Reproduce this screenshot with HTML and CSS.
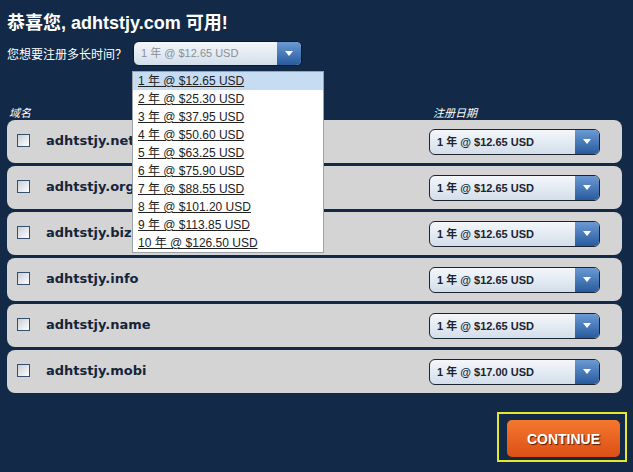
FILE: index.html
```html
<!DOCTYPE html>
<html lang="zh">
<head>
    <meta charset="UTF-8">
    <title>域名注册</title>
    <link rel="stylesheet" href="styles.css">
</head>
<body>

<div class="page">
    <h1>恭喜您, adhtstjy.com 可用!</h1>

    <div class="term">
        <span class="term-label">您想要注册多长时间？</span>
        <div class="pick pick-top">
            <span class="pick-text">1 年 @ $12.65 USD</span>
            <span class="pick-btn"><i class="arrow"></i></span>
        </div>

        <!-- open list of the select above -->
        <ul class="options">
            <li class="on"><span>1 年 @ $12.65 USD</span></li>
            <li><span>2 年 @ $25.30 USD</span></li>
            <li><span>3 年 @ $37.95 USD</span></li>
            <li><span>4 年 @ $50.60 USD</span></li>
            <li><span>5 年 @ $63.25 USD</span></li>
            <li><span>6 年 @ $75.90 USD</span></li>
            <li><span>7 年 @ $88.55 USD</span></li>
            <li><span>8 年 @ $101.20 USD</span></li>
            <li><span>9 年 @ $113.85 USD</span></li>
            <li><span>10 年 @ $126.50 USD</span></li>
        </ul>
    </div>

    <div class="heads">
        <span class="head-name">域名</span>
        <span class="head-date">注册日期</span>
    </div>

    <div class="domains">
        <div class="domain">
            <span class="check"></span>
            <span class="domain-name">adhtstjy.net</span>
            <div class="pick"><span class="pick-text">1 年 @ $12.65 USD</span><span class="pick-btn"><i class="arrow"></i></span></div>
        </div>
        <div class="domain">
            <span class="check"></span>
            <span class="domain-name">adhtstjy.org</span>
            <div class="pick"><span class="pick-text">1 年 @ $12.65 USD</span><span class="pick-btn"><i class="arrow"></i></span></div>
        </div>
        <div class="domain">
            <span class="check"></span>
            <span class="domain-name">adhtstjy.biz</span>
            <div class="pick"><span class="pick-text">1 年 @ $12.65 USD</span><span class="pick-btn"><i class="arrow"></i></span></div>
        </div>
        <div class="domain">
            <span class="check"></span>
            <span class="domain-name">adhtstjy.info</span>
            <div class="pick"><span class="pick-text">1 年 @ $12.65 USD</span><span class="pick-btn"><i class="arrow"></i></span></div>
        </div>
        <div class="domain">
            <span class="check"></span>
            <span class="domain-name">adhtstjy.name</span>
            <div class="pick"><span class="pick-text">1 年 @ $12.65 USD</span><span class="pick-btn"><i class="arrow"></i></span></div>
        </div>
        <div class="domain">
            <span class="check"></span>
            <span class="domain-name">adhtstjy.mobi</span>
            <div class="pick"><span class="pick-text">1 年 @ $17.00 USD</span><span class="pick-btn"><i class="arrow"></i></span></div>
        </div>
    </div>

    <div class="footer">
        <div class="continue-box">
            <button class="continue">CONTINUE</button>
        </div>
    </div>
</div>

</body>
</html>
```

FILE: styles.css
```css
body {
    margin: 0;
    background-color: #122a47;
    font-family: "Liberation Sans", "Noto Sans CJK SC", sans-serif;
}
.page {
    padding: 12px 6px 0 7px;
}
h1 {
    margin: 0;
    color: white;
    font-size: 18px;
    line-height: 22px;
    font-weight: bold;
}

/* duration picker */
.term {
    position: relative;
    display: flex;
    align-items: center;
    margin-top: 7px;
}
.term-label {
    color: white;
    font-size: 12px;
    font-family: "Noto Sans CJK SC", sans-serif;
    margin-right: 6px;
}
.pick {
    display: flex;
    width: 171px;
    height: 26px;
    box-sizing: border-box;
    border: 1px solid #1c2430;
    border-radius: 6px;
    background: linear-gradient(#f4f7fb, #d3deea);
    overflow: hidden;
}
.pick-text {
    flex: 1;
    padding-left: 7px;
    line-height: 24px;
    font-size: 11px;
    font-weight: bold;
    color: #1a2433;
}
.pick-btn {
    width: 24px;
    display: flex;
    align-items: center;
    justify-content: center;
    background: linear-gradient(#6b9ad3, #285a9e);
}
.arrow {
    width: 0;
    height: 0;
    border-left: 4px solid transparent;
    border-right: 4px solid transparent;
    border-top: 5px solid white;
}
.pick-top {
    width: 169px;
    height: 25px;
    border-color: #0c1a2c;
}
.pick-top .pick-text {
    font-weight: normal;
    color: #8a8f96;
    line-height: 23px;
}

.options {
    position: absolute;
    left: 125px;
    top: 30px;
    width: 192px;
    margin: 0;
    padding: 0;
    list-style: none;
    background: white;
    border: 1px solid #9aa3ad;
    box-sizing: border-box;
}
.options li {
    height: 18px;
    line-height: 18px;
    padding-left: 5px;
    font-size: 12px;
    color: #222;
}
.options li span {
    text-decoration: underline;
}
.options li.on {
    background-color: #c6dcf2;
}

/* column headings */
.heads {
    display: flex;
    margin-top: 38px;
    padding-right: 5px;
    height: 16px;
    line-height: 16px;
    color: white;
    font-size: 11px;
    font-style: italic;
    font-family: "Noto Sans CJK SC", sans-serif;
}
.head-name {
    flex: 1;
    padding-left: 2px;
}
.head-date {
    width: 189px;
}

/* domain rows */
.domains {
    display: flex;
    flex-direction: column;
    gap: 3px;
    margin-right: 5px;
}
.domain {
    display: flex;
    align-items: center;
    height: 43px;
    padding: 0 22px 0 10px;
    background-color: #d4d4d4;
    border-radius: 8px;
}
.check {
    width: 13px;
    height: 13px;
    box-sizing: border-box;
    border: 1px solid #34506f;
    background: linear-gradient(135deg, #c9ced6, #ffffff);
    margin-top: -3px;
}
.domain-name {
    flex: 1;
    margin-left: 16px;
    margin-top: -3px;
    font-family: "DejaVu Sans", sans-serif;
    font-size: 13px;
    font-weight: bold;
    color: #16243a;
}

.footer {
    display: flex;
    justify-content: flex-end;
    margin-top: 19px;
}
.continue-box {
    border: 2px solid #e6e62a;
    padding: 6px 5px 3px 8px;
}
.continue {
    display: block;
    width: 113px;
    height: 37px;
    border: none;
    border-radius: 5px;
    background: linear-gradient(#f4782e, #dd4f16);
    color: white;
    font-family: "Liberation Sans", sans-serif;
    font-size: 14px;
    font-weight: bold;
    text-shadow: 1px 1px 1px #5a1c00;
    cursor: pointer;
}
```
